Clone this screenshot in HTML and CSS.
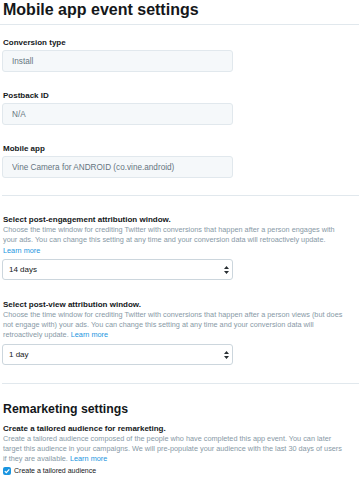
FILE: index.html
```html
<!DOCTYPE html>
<html>
<head>
    <title>Mobile app event settings</title>
    <link rel="stylesheet" href="styles.css">
</head>
<body>
    <div class="page">
        <h1 class="page-title">Mobile app event settings</h1>

        <div class="fields">
            <div class="field">
                <label class="field-label">Conversion type</label>
                <input class="field-input" type="text" value="Install" readonly>
            </div>
            <div class="field">
                <label class="field-label">Postback ID</label>
                <input class="field-input" type="text" value="N/A" readonly>
            </div>
            <div class="field">
                <label class="field-label">Mobile app</label>
                <input class="field-input" type="text" value="Vine Camera for ANDROID (co.vine.android)" readonly>
            </div>
        </div>

        <hr class="divider">

        <div class="settings">
            <div class="setting">
                <h3 class="setting-title">Select post-engagement attribution window.</h3>
                <p class="setting-help">Choose the time window for crediting Twitter with conversions that happen after a person engages with<br>your ads. You can change this setting at any time and your conversion data will retroactively update.<br><a href="#">Learn more</a></p>
                <div class="select-wrap">
                    <select class="field-select">
                        <option>14 days</option>
                    </select>
                    <svg class="select-arrows" width="5" height="8" viewBox="0 0 5 8"><path d="M2.5 0L5 3H0z M2.5 8L0 5h5z" fill="#292f33"/></svg>
                </div>
            </div>

            <div class="setting">
                <h3 class="setting-title">Select post-view attribution window.</h3>
                <p class="setting-help">Choose the time window for crediting Twitter with conversions that happen after a person views (but does<br>not engage with) your ads. You can change this setting at any time and your conversion data will<br>retroactively update. <a href="#">Learn more</a></p>
                <div class="select-wrap">
                    <select class="field-select">
                        <option>1 day</option>
                    </select>
                    <svg class="select-arrows" width="5" height="8" viewBox="0 0 5 8"><path d="M2.5 0L5 3H0z M2.5 8L0 5h5z" fill="#292f33"/></svg>
                </div>
            </div>
        </div>

        <hr class="divider">

        <h2 class="section-title">Remarketing settings</h2>
        <div class="setting setting-last">
            <h3 class="setting-title">Create a tailored audience for remarketing.</h3>
            <p class="setting-help">Create a tailored audience composed of the people who have completed this app event. You can later<br>target this audience in your campaigns. We will pre-populate your audience with the last 30 days of users<br>if they are available. <a href="#">Learn more</a></p>
            <label class="check">
                <span class="check-box"><svg width="8" height="8" viewBox="0 0 8 8"><path d="M1.8 4.2l1.5 1.5 3-3.4" fill="none" stroke="#fff" stroke-width="1.2"/></svg></span>
                Create a tailored audience
            </label>
        </div>
    </div>
</body>
</html>
```

FILE: styles.css
```css
body {
    margin: 0;
    font-family: "Liberation Sans", Arial, sans-serif;
    color: #14171a;
    background: #fff;
}
.page {
    padding: 0 0 0 2px;
}
.page-title {
    margin: 0 0 0 -2px;
    padding: 0 0 4px 3px;
    font-size: 16px;
    line-height: 20px;
    font-weight: bold;
    border-bottom: 1px solid #e1e8ed;
}
.fields {
    display: flex;
    flex-direction: column;
    gap: 19px;
    padding: 13px 0 17px;
}
.field {
    display: flex;
    flex-direction: column;
}
.field-label {
    font-size: 8px;
    line-height: 10px;
    font-weight: bold;
    margin: 0 0 2px 1px;
}
.field-input {
    box-sizing: border-box;
    width: 231px;
    height: 22px;
    margin: 0;
    padding: 0 9px;
    border: 1px solid #e1e8ed;
    border-radius: 3px;
    background: #f5f8fa;
    color: #66757f;
    font-family: inherit;
    font-size: 8.2px;
    outline: none;
}
.divider {
    margin: 0;
    border: none;
    border-top: 1px solid #e1e8ed;
}
.settings {
    display: flex;
    flex-direction: column;
    gap: 20px;
    padding: 19px 0 18px;
}
.setting-title {
    margin: 0 0 0 1px;
    font-size: 8px;
    line-height: 10px;
    font-weight: bold;
}
.setting-help {
    margin: 0 0 3px 1px;
    font-size: 7.3px;
    line-height: 10.3px;
    color: #8899a6;
}
.setting-help a {
    color: #1b95e0;
    text-decoration: none;
}
.select-wrap {
    position: relative;
    width: 231px;
}
.field-select {
    display: block;
    appearance: none;
    box-sizing: border-box;
    width: 231px;
    height: 21px;
    margin: 0;
    padding: 0 6px;
    border: 1px solid #ccd6dd;
    border-radius: 3px;
    background: #fff;
    color: #14171a;
    font-family: inherit;
    font-size: 8px;
}
.select-arrows {
    position: absolute;
    right: 4px;
    top: 7px;
}
.section-title {
    margin: 18px 0 0 1px;
    font-size: 12.3px;
    line-height: 15px;
    font-weight: bold;
}
.setting-last {
    padding-top: 7px;
}
.setting-last .setting-help {
    margin-bottom: 1px;
}
.check {
    display: flex;
    align-items: center;
    gap: 3px;
    margin-left: 1px;
    font-size: 7px;
    line-height: 10px;
}
.check-box {
    display: flex;
    width: 8px;
    height: 8px;
    border-radius: 2px;
    background: #1b95e0;
}
```
